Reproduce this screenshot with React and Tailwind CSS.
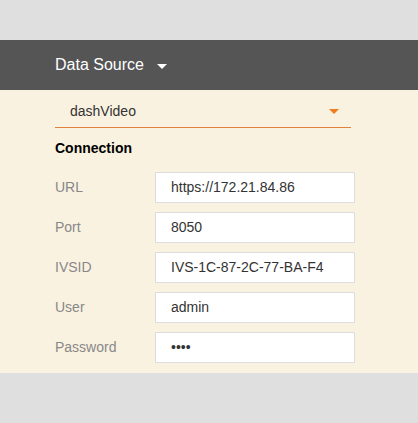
import React from "react";

const fields = [
  { label: "URL", value: "https://172.21.84.86" },
  { label: "Port", value: "8050" },
  { label: "IVSID", value: "IVS-1C-87-2C-77-BA-F4" },
  { label: "User", value: "admin" },
  { label: "Password", value: "••••" },
];

export default function App() {
  return (
    <div
      className="w-[418px] h-[423px] bg-[#dfdfdf] pt-[40px]"
      style={{ fontFamily: "Arial, 'Liberation Sans', sans-serif" }}
    >
      {/* Barra de titulo */}
      <div className="h-[50px] bg-[#555555] flex items-center pl-[55px]">
        <span className="text-white text-[16px]">Data Source</span>
        <span className="ml-[13px] mt-[2px] w-0 h-0 border-l-[5px] border-r-[5px] border-t-[5px] border-l-transparent border-r-transparent border-t-white" />
      </div>

      {/* Panel */}
      <div className="bg-[#faf2e1] h-[283px] pl-[55px]">
        <div className="w-[296px] h-[38px] border-b border-[#e0823d] flex items-center justify-between pl-[15px] pr-[12px] pt-[6px]">
          <span className="text-[14px] text-[#333]">dashVideo</span>
          <span className="w-0 h-0 border-l-[5px] border-r-[5px] border-t-[5px] border-l-transparent border-r-transparent border-t-[#f07d22]" />
        </div>

        <div className="mt-[10px] text-[14px] font-bold text-black">Connection</div>

        <div className="mt-[13px] flex flex-col gap-[9px]">
          {fields.map((f) => (
            <div key={f.label} className="flex items-center">
              <span className="w-[100px] shrink-0 text-[14px] text-[#888]">{f.label}</span>
              <div className="w-[200px] shrink-0 h-[31px] bg-white border border-[#dddddd] flex items-center pl-[15px] text-[14px] text-[#333]">
                {f.value}
              </div>
            </div>
          ))}
        </div>
      </div>
    </div>
  );
}
